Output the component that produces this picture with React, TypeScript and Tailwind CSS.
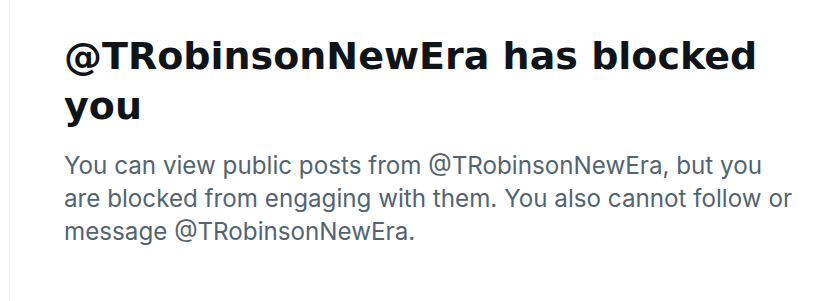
export default function App() {
  return (
    <main className="min-h-screen bg-white">
      <div className="ml-[9px] min-h-screen border-l border-[#eff3f4] pl-[54px] pt-[31px]">
        <div className="w-[734px]">
          <h1 className="font-['DejaVu_Sans',sans-serif] text-[38px] font-bold leading-[50px] text-[#0f1419]">
            @TRobinsonNewEra has blocked you
          </h1>
          <p className="mt-[18px] font-['Inter',sans-serif] text-[24.2px] leading-[33px] text-[#536471]">
            You can view public posts from @TRobinsonNewEra, but you are blocked from engaging with them. You
            also cannot follow or message @TRobinsonNewEra.
          </p>
        </div>
      </div>
    </main>
  );
}
